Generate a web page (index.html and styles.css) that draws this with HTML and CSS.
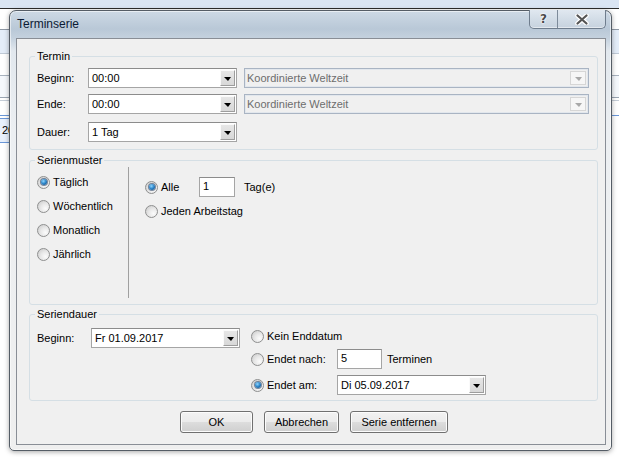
FILE: index.html
```html
<!DOCTYPE html>
<html lang="de">
<head>
  <meta charset="UTF-8">
  <title>Terminserie</title>
  <link rel="stylesheet" href="styles.css">
</head>
<body>
  <!-- Kalenderansicht hinter dem Dialog -->
  <div class="backdrop">
    <div class="bd-top"></div>
    <div class="bd-row r1"></div>
    <div class="bd-row r2"></div>
    <div class="bd-row r3"></div>
    <div class="bd-row r4"></div>
    <div class="bd-row r5"></div>
    <div class="bd-row r6"></div>
    <div class="bd-row r7"><span class="bd-cell">2017</span></div>
  </div>

  <div class="dialog">
    <div class="titlebar">
      <span class="title">Terminserie</span>
      <div class="caption-buttons">
        <span class="cap-btn help">?</span>
        <span class="cap-btn close">
          <svg width="14" height="11" viewBox="0 0 14 11">
            <path d="M2.5 1.5 L11.5 9.5 M11.5 1.5 L2.5 9.5" stroke="#fff" stroke-width="4.5" stroke-linecap="round"/>
            <path d="M2.5 1.5 L11.5 9.5 M11.5 1.5 L2.5 9.5" stroke="#555" stroke-width="2.2" stroke-linecap="round"/>
          </svg>
        </span>
      </div>
    </div>

    <div class="client">
      <fieldset class="group termin">
        <legend>Termin</legend>
        <div class="row">
          <span class="lbl">Beginn:</span>
          <div class="combo"><span class="val">00:00</span><span class="drop"></span></div>
          <div class="combo tz"><span class="val">Koordinierte Weltzeit</span><span class="drop"></span></div>
        </div>
        <div class="row r-ende">
          <span class="lbl">Ende:</span>
          <div class="combo"><span class="val">00:00</span><span class="drop"></span></div>
          <div class="combo tz"><span class="val">Koordinierte Weltzeit</span><span class="drop"></span></div>
        </div>
        <div class="row r-dauer">
          <span class="lbl">Dauer:</span>
          <div class="combo"><span class="val">1 Tag</span><span class="drop"></span></div>
        </div>
      </fieldset>

      <fieldset class="group pattern">
        <legend>Serienmuster</legend>
        <div class="pattern-body">
          <div class="freq">
            <label class="radio"><span class="dot on"></span>Täglich</label>
            <label class="radio"><span class="dot"></span>Wöchentlich</label>
            <label class="radio"><span class="dot"></span>Monatlich</label>
            <label class="radio"><span class="dot"></span>Jährlich</label>
          </div>
          <div class="interval">
            <div class="row r-alle">
              <label class="radio w54"><span class="dot on"></span>Alle</label>
              <span class="edit days">1</span>
              <span class="unit">Tag(e)</span>
            </div>
            <div class="row r-werktag">
              <label class="radio"><span class="dot"></span>Jeden Arbeitstag</label>
            </div>
          </div>
        </div>
      </fieldset>

      <fieldset class="group duration">
        <legend>Seriendauer</legend>
        <div class="duration-body">
          <div class="row start">
            <span class="lbl">Beginn:</span>
            <div class="combo"><span class="val">Fr 01.09.2017</span><span class="drop"></span></div>
          </div>
          <div class="end">
            <div class="row r-kein">
              <label class="radio"><span class="dot"></span>Kein Enddatum</label>
            </div>
            <div class="row r-nach">
              <label class="radio w86"><span class="dot"></span>Endet nach:</label>
              <span class="edit count">5</span>
              <span class="unit small-gap">Terminen</span>
            </div>
            <div class="row r-am">
              <label class="radio w86"><span class="dot on"></span>Endet am:</label>
              <div class="combo"><span class="val">Di 05.09.2017</span><span class="drop"></span></div>
            </div>
          </div>
        </div>
      </fieldset>

      <div class="actions">
        <button class="btn ok">OK</button>
        <button class="btn cancel">Abbrechen</button>
        <button class="btn remove">Serie entfernen</button>
      </div>
    </div>
  </div>
</body>
</html>
```

FILE: styles.css
```css
* {
  box-sizing: border-box;
}

body {
  margin: 0;
  width: 619px;
  height: 457px;
  overflow: hidden;
  position: relative;
  background: #fff;
  font-family: "Liberation Sans", Arial, sans-serif;
  font-size: 11px;
  color: #000;
}

/* Kalender im Hintergrund */
.bd-top {
  height: 9px;
  background: #dae5f3;
  border-bottom: 1px solid #2d2d2d;
}

.bd-row {
  border-bottom: 1px solid #a9b3bf;
}

.bd-row.r1 { height: 21px; border-bottom-color: #8e98a4; }
.bd-row.r2 { height: 24px; background: #e4edf9; border-bottom-color: #c0cad6; }
.bd-row.r3 { height: 22px; }
.bd-row.r4 { height: 22px; background: #f5f8fc; border-bottom-color: #9aa5b2; }
.bd-row.r5 { height: 3px; border-bottom-color: #c5cdd7; }
.bd-row.r6 { height: 15px; border-bottom-color: #6a97d8; }
.bd-row.r7 { height: 30px; border-bottom: 0; }

.bd-cell {
  display: inline-block;
  margin-top: 2px;
  height: 25px;
  line-height: 23px;
  padding: 0 3px 0 2px;
  border: 1px solid #6a97d8;
  border-left: 0;
  background: #e8f0fc;
}

/* Dialogfenster */
.dialog {
  position: absolute;
  left: 9px;
  top: 10px;
  width: 603px;
  height: 441px;
  display: flex;
  flex-direction: column;
  padding: 0 5px 5px 6px;
  border: 1px solid #555d66;
  border-radius: 7px 7px 5px 5px;
  background: linear-gradient(#cdd9e5 0, #b9c8d7 18px, #c4d1de 27px, #e2e8ee 40px, #eceff2 120px, #efefef 100%);
  box-shadow: 0 1px 5px rgba(0, 0, 0, 0.35), inset 0 0 0 1px rgba(255, 255, 255, 0.55);
}

.titlebar {
  height: 27px;
  display: flex;
  align-items: flex-start;
  flex: none;
}

.title {
  flex: 1;
  padding-left: 1px;
  font-size: 12px;
  line-height: 27px;
  color: #0b1a33;
}

.caption-buttons {
  display: flex;
  height: 19px;
  margin-top: -1px;
  border: 1px solid #6f7d8d;
  border-top: 0;
  border-radius: 0 0 5px 5px;
  overflow: hidden;
  background: linear-gradient(#e0e8f0, #c6d2de);
  box-shadow: inset 0 -1px 0 rgba(255, 255, 255, 0.5);
}

.cap-btn {
  display: flex;
  align-items: center;
  justify-content: center;
  height: 100%;
}

.cap-btn.help {
  width: 28px;
  border-right: 1px solid #7d8b9a;
  font-family: "DejaVu Sans", sans-serif;
  font-weight: bold;
  font-size: 12px;
  color: #4a4a4a;
  text-shadow: 0 0 1px #fff, 0 0 2px #fff, 0 0 2px #fff;
}

.cap-btn.close {
  width: 47px;
}

/* Innenbereich */
.client {
  flex: 1;
  display: flex;
  flex-direction: column;
  padding-bottom: 10px;
  border: 1px solid #898e96;
  background: #f0f0f0;
}

.group {
  min-width: 0;
  margin: 0 7px 0 12px;
  padding: 5px 0 7px 7px;
  border: 1px solid #d5dfe5;
  border-radius: 3px;
}

.group legend {
  padding: 0 2px;
  margin-left: -2px;
  line-height: 13px;
}

.group.termin { margin-top: 11px; }
.group.pattern { margin-top: 4px; padding: 0 0 5px 7px; }
.group.duration { margin-top: 3px; padding: 0 0 5px 7px; }

.row {
  display: flex;
  align-items: center;
  height: 20px;
}

.row.r-ende { margin-top: 6px; }
.row.r-dauer { margin-top: 8px; }

.lbl {
  width: 51px;
  flex: none;
}

.duration .lbl {
  width: 54px;
}

/* Kombinationsfelder */
.combo {
  display: flex;
  width: 149px;
  height: 20px;
  flex: none;
  border: 1px solid #a5a5a5;
  border-top-color: #8c8c8c;
  background: #fff;
}

.combo .val {
  flex: 1;
  padding-left: 3px;
  line-height: 18px;
  white-space: nowrap;
  overflow: hidden;
}

.combo .drop {
  width: 15px;
  margin: 1px 1px 1px 0;
  display: flex;
  align-items: center;
  justify-content: center;
  border: 1px solid;
  border-color: #fafafa #9d9d9d #9d9d9d #fafafa;
  background: linear-gradient(#e6e6e6, #d8d8d8);
}

.combo .drop::after {
  content: "";
  margin-top: 1px;
  border-left: 4px solid transparent;
  border-right: 3px solid transparent;
  border-top: 4px solid #000;
}

.combo.tz {
  width: 345px;
  margin-left: 7px;
  border-color: #a9b4c3;
  background: #f0f0f0;
  box-shadow: inset 0 0 0 1px #e2e7ed;
  color: #6d6d6d;
}

.combo.tz .val {
  padding-left: 2px;
}

.combo.tz .drop {
  width: 16px;
  margin: 2px 2px 2px 0;
  border: 1px solid #d6d6d6;
  background: #f6f6f6;
}

.combo.tz .drop::after {
  border-top-color: #a8a8a8;
}

/* Eingabefelder */
.edit {
  height: 20px;
  flex: none;
  padding-left: 3px;
  line-height: 17px;
  border: 1px solid #a5a5a5;
  border-top-color: #8c8c8c;
  background: #fff;
}

.edit.days { width: 36px; }
.edit.count { width: 45px; }

.unit { margin-left: 9px; }
.unit.small-gap { margin-left: 5px; }

/* Optionsfelder */
.radio {
  display: flex;
  align-items: center;
  white-space: nowrap;
}

.radio.w54 { width: 54px; }
.radio.w86 { width: 86px; }

.dot {
  position: relative;
  width: 13px;
  height: 13px;
  flex: none;
  margin-right: 3px;
  border: 1px solid #8e8f8f;
  border-radius: 50%;
  background: radial-gradient(circle at 68% 68%, #fbfbfb 0, #e8e8e8 45%, #c6c6c6 100%);
}

.dot.on::after {
  content: "";
  position: absolute;
  left: 2.5px;
  top: 2.5px;
  width: 6px;
  height: 6px;
  border-radius: 50%;
  background: radial-gradient(circle at 40% 35%, #8fd6ff 0, #2a82c6 50%, #0d3f73 100%);
  box-shadow: 0 0 0 1px rgba(20, 50, 90, 0.55);
}

/* Serienmuster */
.pattern-body {
  display: flex;
  height: 132px;
}

.freq {
  width: 91px;
  padding-top: 3px;
}

.freq .radio {
  height: 24px;
}

.interval {
  height: 131px;
  padding-left: 16px;
  border-left: 1px solid #a0a0a0;
}

.row.r-alle { margin-top: 10px; }
.row.r-werktag { margin-top: 4px; }

/* Seriendauer */
.duration-body {
  display: flex;
  align-items: flex-start;
}

.row.start { margin-top: 7px; }

.end { margin-left: 11px; }

.row.r-kein { margin-top: 5px; }
.row.r-nach { margin-top: 3px; }
.row.r-am { margin-top: 6px; }

/* Schaltflächen */
.actions {
  display: flex;
  justify-content: center;
  gap: 11px;
  margin-top: 10px;
  padding-left: 6px;
}

.btn {
  height: 22px;
  padding: 0;
  border: 1px solid #707070;
  border-radius: 3px;
  background: linear-gradient(#f2f2f2 0, #ebebeb 50%, #dddddd 50%, #cfcfcf 100%);
  box-shadow: inset 0 0 0 1px #fcfcfc;
  font: inherit;
  color: #000;
}

.btn.ok { width: 73px; }
.btn.cancel { width: 75px; }
.btn.remove { width: 98px; }
```
